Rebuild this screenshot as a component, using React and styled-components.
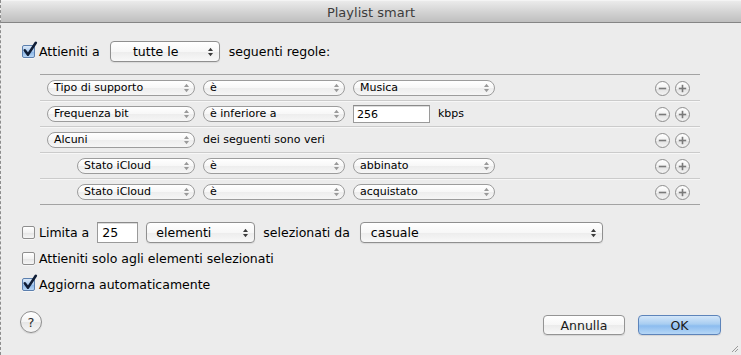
import React from 'react';
import styled, { createGlobalStyle } from 'styled-components';

const Global = createGlobalStyle`
  html, body { margin: 0; padding: 0; background: #ececec; }
  body { font-family: "DejaVu Sans", "Liberation Sans", sans-serif; color: #000; }
  * { box-sizing: border-box; }
`;

const Window = styled.div`
  position: relative;
  width: 741px;
  height: 355px;
  background: #ececec;
  border-left: 1px dashed #8d8d8d;
  display: flex;
  flex-direction: column;
  overflow: hidden;
`;

const TitleBar = styled.div`
  height: 23px;
  flex: none;
  display: flex;
  align-items: center;
  justify-content: center;
  background: linear-gradient(#ebebeb, #d4d4d4 50%, #bfbfbf);
  border-top: 1px solid #f4f4f4;
  border-bottom: 1px solid #858585;
  font-size: 13px;
  color: #3c3c3c;
  padding-top: 1px;
`;

const Body = styled.div`
  flex: 1;
  display: flex;
  flex-direction: column;
  padding: 18px 20px 0 21px;
`;

const Row = styled.div`
  display: flex;
  align-items: center;
  height: 21px;
  font-size: 12.5px;
`;

const Label = styled.span`
  margin-left: ${(p) => p.$ml ?? 0}px;
  white-space: nowrap;
`;

const BoxWrap = styled.span`
  position: relative;
  width: 13px;
  height: 13px;
  flex: none;
  border-radius: 2px;
  border: 1px solid ${(p) => (p.$checked ? '#5b7fae' : '#8e8e8e')};
  background: ${(p) =>
    p.$checked
      ? 'linear-gradient(#dbe9f8, #a9c9ee 50%, #86b2e4 51%, #b8d6f5)'
      : 'linear-gradient(#ffffff, #f2f2f2 50%, #e4e4e4 51%, #f6f6f6)'};
  box-shadow: 0 1px 0 rgba(255,255,255,0.6);
`;

const CheckMark = styled.svg`
  position: absolute;
  left: 0px;
  top: -4px;
  overflow: visible;
`;

const CheckBox = ({ checked }) => (
  <BoxWrap $checked={checked}>
    {checked && (
      <CheckMark width="14" height="15" viewBox="0 0 14 15">
        <path d="M1.8 8.3 L5 12.6 L12.8 0.8" fill="none" stroke="#0f1d36" strokeWidth="2.6" strokeLinecap="round" strokeLinejoin="round" />
      </CheckMark>
    )}
  </BoxWrap>
);

const PopupBox = styled.div`
  position: relative;
  flex: none;
  width: ${(p) => p.$w}px;
  height: 21px;
  margin-left: ${(p) => p.$ml ?? 0}px;
  border: 1px solid #8f8f8f;
  border-radius: 4px;
  background: linear-gradient(#ffffff, #f7f7f7 50%, #ececec 51%, #f8f8f8);
  box-shadow: 0 1px 1px rgba(0,0,0,0.08);
  display: flex;
  align-items: center;
  justify-content: ${(p) => (p.$center ? 'center' : 'flex-start')};
  padding: 0 18px 0 ${(p) => (p.$center ? 0 : p.$pl ?? 9)}px;
  font-size: 12.5px;
  white-space: nowrap;
`;

const ArrowIcon = styled.svg`
  position: absolute;
  right: ${(p) => p.$r}px;
  top: 50%;
  transform: translateY(-50%);
`;

const Arrows = ({ color, right }) => (
  <ArrowIcon $r={right} width="5" height="9" viewBox="0 0 5 9">
    <polygon points="0,3.6 2.5,0.3 5,3.6" fill={color} />
    <polygon points="0,5.4 2.5,8.7 5,5.4" fill={color} />
  </ArrowIcon>
);

const Popup = ({ w, ml, center, pl, children }) => (
  <PopupBox $w={w} $ml={ml} $center={center} $pl={pl}>
    {children}
    <Arrows color="#3a3a3a" right={6} />
  </PopupBox>
);

const RulesBox = styled.div`
  margin: 12px 0 0 18px;
  width: 660px;
  border-top: 1px solid #a3a3a3;
`;

const RuleRow = styled.div`
  height: 26px;
  display: flex;
  align-items: center;
  padding: 0 10px 0 ${(p) => 7 + (p.$indent ? 30 : 0)}px;
  border-bottom: 1px solid ${(p) => (p.$last ? '#a3a3a3' : '#cbcbcb')};
  box-shadow: ${(p) => (p.$last ? 'none' : '0 1px 0 #f7f7f7')};
  font-size: 11px;
`;

const SmallPopupBox = styled.div`
  position: relative;
  flex: none;
  width: ${(p) => p.$w}px;
  height: 16px;
  margin-right: 8px;
  border: 1px solid #9c9c9c;
  border-radius: 8px;
  background: linear-gradient(#ffffff, #f7f7f7 50%, #ededed 51%, #f6f6f6);
  display: flex;
  align-items: center;
  padding: 0 14px 0 6px;
  font-size: 11px;
  white-space: nowrap;
`;

const SmallPopup = ({ w, children }) => (
  <SmallPopupBox $w={w}>
    {children}
    <Arrows color="#9a9a9a" right={5} />
  </SmallPopupBox>
);

const SmallInput = styled.input`
  flex: none;
  width: 77px;
  height: 18px;
  margin: 1px 8px 0 0;
  border: 1px solid #9a9a9a;
  border-top-color: #8a8a8a;
  box-shadow: inset 0 1px 0 #dcdcdc;
  background: #fff;
  font-family: inherit;
  font-size: 11px;
  padding: 0 0 0 3px;
  outline: none;
  color: #000;
`;

const Input = styled.input`
  flex: none;
  width: ${(p) => p.$w}px;
  height: 21px;
  margin-left: ${(p) => p.$ml ?? 0}px;
  border: 1px solid #9a9a9a;
  border-top-color: #8a8a8a;
  box-shadow: inset 0 1px 0 #dcdcdc;
  background: #fff;
  font-family: inherit;
  font-size: 12.5px;
  padding: 0 0 0 4px;
  outline: none;
  color: #000;
`;

const Spacer = styled.div`
  flex: 1;
`;

const RowButtons = styled.div`
  display: flex;
  gap: 5px;
  margin-top: 2px;
`;

const CircleBtn = styled.div`
  width: 15px;
  height: 15px;
  border-radius: 50%;
  border: 1px solid #8e8e8e;
  background: linear-gradient(#ffffff, #f1f1f1 50%, #e3e3e3 51%, #f3f3f3);
  display: flex;
  align-items: center;
  justify-content: center;
`;

const MinusPlus = ({ plus }) => (
  <CircleBtn>
    <svg width="9" height="9" viewBox="0 0 9 9">
      <path d="M0.8 4.5 H8.2" stroke="#7a7a7a" strokeWidth="1.6" />
      {plus && <path d="M4.5 0.8 V8.2" stroke="#7a7a7a" strokeWidth="1.6" />}
    </svg>
  </CircleBtn>
);

const Options = styled.div`
  margin-top: 17px;
  display: flex;
  flex-direction: column;
  gap: 5px;
`;

const Footer = styled.div`
  margin-top: 16px;
  height: 24px;
  display: flex;
`;

const HelpBtn = styled.div`
  width: 22px;
  height: 22px;
  margin-left: -2px;
  align-self: flex-start;
  border-radius: 50%;
  border: 1px solid #8e8e8e;
  background: linear-gradient(#ffffff, #f3f3f3 50%, #e6e6e6 51%, #f7f7f7);
  box-shadow: 0 1px 1px rgba(0,0,0,0.1);
  display: flex;
  align-items: center;
  justify-content: center;
  font-size: 13px;
  color: #2a2a2a;
`;

const Button = styled.div`
  align-self: flex-end;
  width: ${(p) => p.$w}px;
  height: 20px;
  margin-left: ${(p) => p.$ml ?? 0}px;
  border-radius: 4px;
  border: 1px solid ${(p) => (p.$primary ? '#5d84ba' : '#949494')};
  background: ${(p) =>
    p.$primary
      ? 'linear-gradient(#d3e6f9, #a8cdf1 45%, #8cbcef 55%, #b6d7f6)'
      : 'linear-gradient(#ffffff, #f6f6f6 50%, #ebebeb 51%, #f8f8f8)'};
  box-shadow: 0 1px 1px rgba(0,0,0,0.1);
  display: flex;
  align-items: center;
  justify-content: center;
  font-size: 12.5px;
  color: #1a1a1a;
`;

const Grip = styled.svg`
  position: absolute;
  right: 2px;
  bottom: 2px;
`;

export default function App() {
  return (
    <>
      <Global />
      <Window>
        <TitleBar>Playlist smart</TitleBar>
        <Body>
          <Row>
            <CheckBox checked />
            <Label $ml={4}>Attieniti a</Label>
            <Popup w={110} ml={10} center>tutte le</Popup>
            <Label $ml={9}>seguenti regole:</Label>
          </Row>

          <RulesBox>
            <RuleRow>
              <SmallPopup w={148}>Tipo di supporto</SmallPopup>
              <SmallPopup w={142}>è</SmallPopup>
              <SmallPopup w={142}>Musica</SmallPopup>
              <Spacer />
              <RowButtons><MinusPlus /><MinusPlus plus /></RowButtons>
            </RuleRow>
            <RuleRow>
              <SmallPopup w={148}>Frequenza bit</SmallPopup>
              <SmallPopup w={142}>è inferiore a</SmallPopup>
              <SmallInput readOnly value="256" />
              <span>kbps</span>
              <Spacer />
              <RowButtons><MinusPlus /><MinusPlus plus /></RowButtons>
            </RuleRow>
            <RuleRow>
              <SmallPopup w={148}>Alcuni</SmallPopup>
              <span>dei seguenti sono veri</span>
              <Spacer />
              <RowButtons><MinusPlus /><MinusPlus plus /></RowButtons>
            </RuleRow>
            <RuleRow $indent>
              <SmallPopup w={118}>Stato iCloud</SmallPopup>
              <SmallPopup w={142}>è</SmallPopup>
              <SmallPopup w={142}>abbinato</SmallPopup>
              <Spacer />
              <RowButtons><MinusPlus /><MinusPlus plus /></RowButtons>
            </RuleRow>
            <RuleRow $indent $last>
              <SmallPopup w={118}>Stato iCloud</SmallPopup>
              <SmallPopup w={142}>è</SmallPopup>
              <SmallPopup w={142}>acquistato</SmallPopup>
              <Spacer />
              <RowButtons><MinusPlus /><MinusPlus plus /></RowButtons>
            </RuleRow>
          </RulesBox>

          <Options>
            <Row>
              <CheckBox />
              <Label $ml={4}>Limita a</Label>
              <Input $w={41} $ml={8} readOnly value="25" />
              <Popup w={109} ml={8}>elementi</Popup>
              <Label $ml={8}>selezionati da</Label>
              <Popup w={243} ml={10} pl={10}>casuale</Popup>
            </Row>
            <Row>
              <CheckBox />
              <Label $ml={4}>Attieniti solo agli elementi selezionati</Label>
            </Row>
            <Row>
              <CheckBox checked />
              <Label $ml={4}>Aggiorna automaticamente</Label>
            </Row>
          </Options>

          <Footer>
            <HelpBtn>?</HelpBtn>
            <Spacer />
            <Button $w={82}>Annulla</Button>
            <Button $w={83} $ml={13} $primary>OK</Button>
          </Footer>
        </Body>
        <Grip width="8" height="8" viewBox="0 0 8 8">
          <path d="M7 1 L1 7 M7 4 L4 7" stroke="#9a9a9a" strokeWidth="1" />
        </Grip>
      </Window>
    </>
  );
}
